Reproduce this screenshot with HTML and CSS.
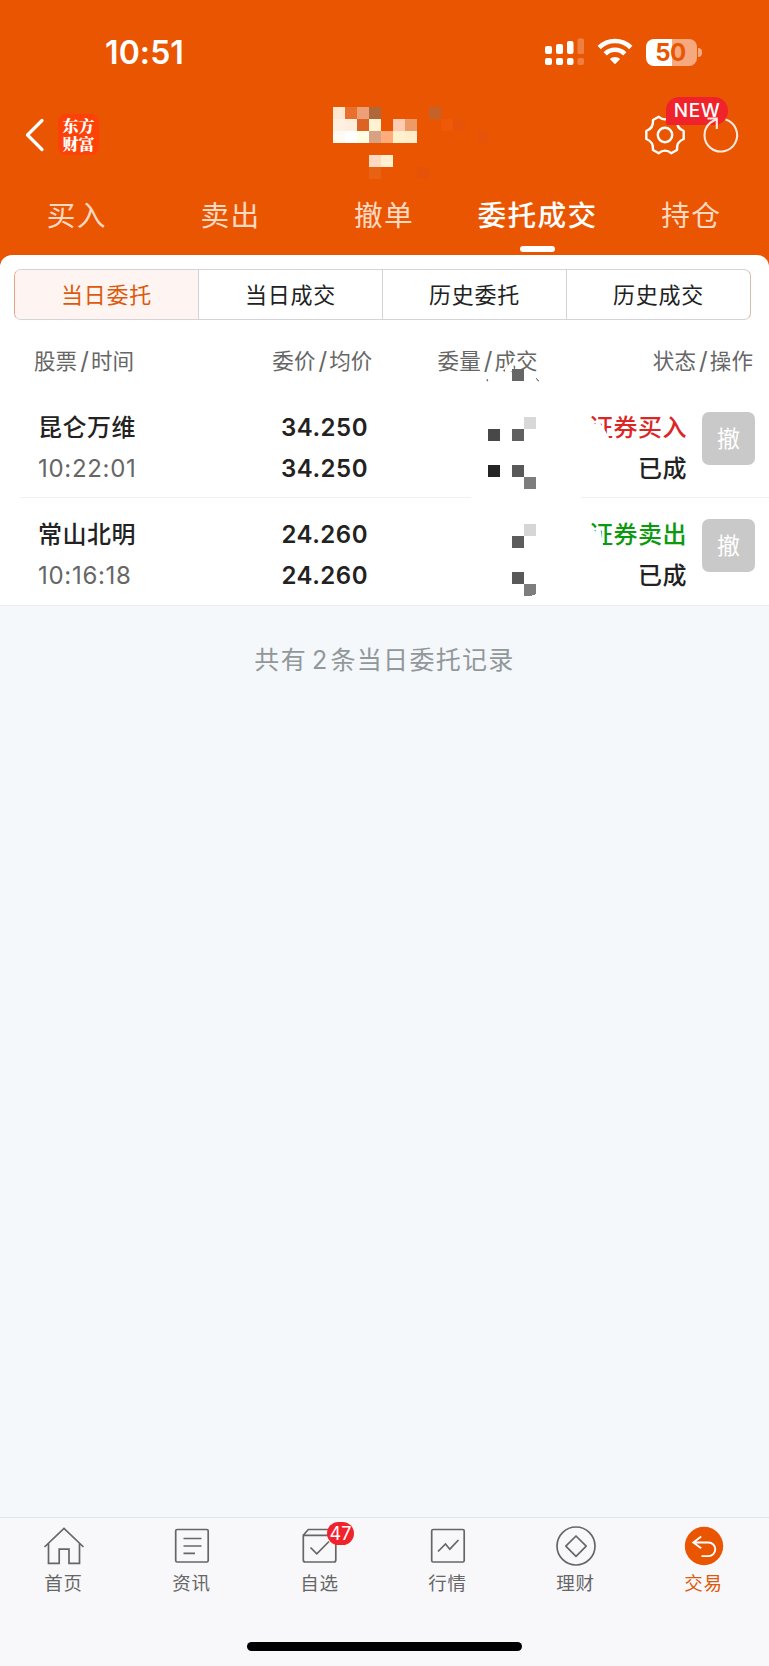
FILE: index.html
```
<!DOCTYPE html>
<html lang="zh-CN">
<head>
	<meta charset="UTF-8">
	<title>委托成交</title>
	<link rel="stylesheet" href="styles.css">
</head>
<body>
	<header class="top">
		<div class="status">
			<span class="clock">10:51</span>
			<div class="signals">
				<svg class="cell" width="40" height="28" viewBox="0 0 40 28" fill="#fff">
					<rect x="0" y="8" width="7" height="8" rx="2"/>
					<rect x="11" y="6" width="7" height="10" rx="2"/>
					<rect x="22" y="3" width="6.500" height="13" rx="2"/>
					<rect x="32.500" y="0.500" width="6.500" height="15.500" rx="1.500" opacity=".25"/>
					<rect x="0" y="20" width="7" height="7" rx="2"/>
					<rect x="11" y="20" width="7" height="7" rx="2"/>
					<rect x="22" y="20" width="6.500" height="7" rx="2"/>
					<rect x="32.500" y="20" width="6.500" height="7" rx="2" opacity=".25"/>
				</svg>
				<svg class="wifi" width="36" height="28" viewBox="0 0 36 28" fill="none" stroke="#fff" stroke-width="4.600">
					<path d="M2.200 9.500a22.500 22.500 0 0 1 31.600 0"/>
					<path d="M8.200 15.800a14 14 0 0 1 19.600 0"/>
					<path d="M18 26.300l-5.200-5.200a7.500 7.500 0 0 1 10.400 0z" fill="#fff" stroke="none"/>
				</svg>
				<div class="battery"><span>50</span></div>
				<i class="nub"></i>
			</div>
		</div>
		<div class="bar">
			<svg class="back" width="20" height="34" viewBox="0 0 20 34" fill="none" stroke="#fff" stroke-width="3.200" stroke-linecap="round" stroke-linejoin="round">
				<path d="M17 2.500L2.500 17 17 31.500"/>
			</svg>
			<div class="logo">东方<br>财富</div>
			<svg class="account" width="168" height="72" viewBox="0 0 168 72" shape-rendering="crispEdges">
				<rect x="0" y="0" width="12" height="12" fill="#ffe8cf"/>
				<rect x="12" y="0" width="12" height="12" fill="#e8702c"/>
				<rect x="24" y="0" width="12" height="12" fill="#eda077"/>
				<rect x="36" y="0" width="12" height="12" fill="#b0683a"/>
				<rect x="96" y="0" width="12" height="12" fill="#c4622a"/>
				<rect x="0" y="12" width="12" height="12" fill="#fff1e2"/>
				<rect x="12" y="12" width="12" height="12" fill="#ffeedd"/>
				<rect x="24" y="12" width="12" height="12" fill="#dd6324"/>
				<rect x="36" y="12" width="12" height="12" fill="#fff2d2"/>
				<rect x="60" y="12" width="12" height="12" fill="#fdccb2"/>
				<rect x="72" y="12" width="12" height="12" fill="#ee9a66"/>
				<rect x="108" y="12" width="12" height="12" fill="#ee5806"/>
				<rect x="120" y="12" width="12" height="12" fill="#e75308"/>
				<rect x="0" y="24" width="12" height="12" fill="#fffaf2"/>
				<rect x="12" y="24" width="12" height="12" fill="#fff"/>
				<rect x="24" y="24" width="12" height="12" fill="#fffde3"/>
				<rect x="36" y="24" width="12" height="12" fill="#d9a183"/>
				<rect x="48" y="24" width="12" height="12" fill="#ffab7c"/>
				<rect x="60" y="24" width="12" height="12" fill="#fff1cb"/>
				<rect x="72" y="24" width="12" height="12" fill="#ffedcb"/>
				<rect x="144" y="24" width="12" height="12" fill="#e75308"/>
				<rect x="36" y="48" width="12" height="12" fill="#fedac3"/>
				<rect x="48" y="48" width="12" height="12" fill="#fff0d0"/>
				<rect x="36" y="60" width="12" height="12" fill="#e96213"/>
				<rect x="84" y="60" width="12" height="12" fill="#e75209"/>
			</svg>
			<div class="tools">
				<svg class="gear" width="40" height="40" viewBox="0 0 40 40" fill="none" stroke="#fff" stroke-width="2.400" stroke-linejoin="round">
					<path d="M13.800 1.800C17.500 5 22.500 5 26.200 1.800L32 5C31.500 10.500 33.500 14 38.700 16V24C33.500 26 31.500 29.500 32 35L26.200 38.200C22.500 35 17.500 35 13.800 38.200L8 35C8.500 29.500 6.500 26 1.300 24V16C6.500 14 8.500 10.500 8 5Z"/>
					<circle cx="20" cy="20" r="7.200"/>
				</svg>
				<span class="new">NEW</span>
				<svg class="refresh" width="38" height="38" viewBox="0 0 38 38" fill="none" stroke="#ffe9dc" stroke-width="2.100">
					<path d="M23.500 3.600A16.300 16.300 0 1 1 8.500 6.600L14.500 3"/>
					<path d="M5.500 2.500H14.800V13"/>
				</svg>
			</div>
		</div>
		<nav class="tabs">
			<a>买入</a>
			<a>卖出</a>
			<a>撤单</a>
			<a class="on">委托成交</a>
			<a>持仓</a>
		</nav>
	</header>

	<main class="sheet">
		<div class="segment">
			<a class="on">当日委托</a>
			<a>当日成交</a>
			<a>历史委托</a>
			<a>历史成交</a>
		</div>
		<div class="head">
			<span>股票<i>/</i>时间</span>
			<span>委价<i>/</i>均价</span>
			<span>委量<i>/</i>成交
				<svg class="mask" width="60" height="24" viewBox="0 0 60 24">
					<path d="M19 11l6-7 3 7h5v2h-14z" fill="#fff"/>
					<rect x="26" y="11" width="12" height="12" fill="#666"/>
					<path d="M1 21l1 2h-1zM50 20l3 3h-1z" fill="#666" stroke="#666" stroke-width=".6"/>
				</svg>
			</span>
			<span>状态<i>/</i>操作</span>
		</div>
		<section class="order buy">
			<div class="stock"><b>昆仑万维</b><time>10:22:01</time></div>
			<div class="price"><b>34.250</b><b>34.250</b></div>
			<svg class="amount" width="48" height="72" viewBox="0 0 48 72" shape-rendering="crispEdges">
				<rect x="36" y="0" width="12" height="12" fill="#d8d8d8"/>
				<rect x="0" y="12" width="12" height="12" fill="#484848"/>
				<rect x="24" y="12" width="12" height="12" fill="#606060"/>
				<rect x="0" y="48" width="12" height="12" fill="#242424"/>
				<rect x="24" y="48" width="12" height="12" fill="#595959"/>
				<rect x="36" y="60" width="12" height="12" fill="#7d7d7d"/>
			</svg>
			<div class="state"><b class="side">证券买入</b><b>已成</b></div>
			<button class="cancel">撤</button>
		</section>
		<section class="order sell">
			<div class="stock"><b>常山北明</b><time>10:16:18</time></div>
			<div class="price"><b>24.260</b><b>24.260</b></div>
			<svg class="amount" width="48" height="72" viewBox="0 0 48 72" shape-rendering="crispEdges">
				<rect x="36" y="0" width="12" height="12" fill="#d6d6d6"/>
				<rect x="24" y="12" width="12" height="12" fill="#5c5c5c"/>
				<rect x="24" y="48" width="12" height="12" fill="#595959"/>
				<path d="M36 60h12v10l-6 2h-6z" fill="#7d7d7d"/>
			</svg>
			<div class="state"><b class="side">证券卖出</b><b>已成</b></div>
			<button class="cancel">撤</button>
		</section>
	</main>
	<p class="total">共有<i>2</i>条当日委托记录</p>

	<footer class="dock">
		<nav class="menu">
			<a>
				<svg width="42" height="42" viewBox="0 0 42 42"><path d="M1.500 21L21 2.500 40.500 21M5.500 17.500V37.300H16.200V23.200H26V37.300H36.500V17.500"/></svg>
				<span>首页</span>
			</a>
			<a>
				<svg width="42" height="42" viewBox="0 0 42 42"><rect x="4.700" y="3.500" width="32.500" height="32.500" rx="1.500"/><path d="M12.500 12.500h18M12.500 20h18M12.500 27.300h11.500"/></svg>
				<span>资讯</span>
			</a>
			<a>
				<svg width="42" height="42" viewBox="0 0 42 42"><path d="M4.300 9.300L9.300 3.500H31.500L36.800 9.300M4.300 9.300H36.800V34q0 2-2 2H6.300q-2 0-2-2zM11.500 21.500l6.300 6.300L30 15.500"/></svg>
				<span>自选</span>
				<em class="badge">47</em>
			</a>
			<a>
				<svg width="42" height="42" viewBox="0 0 42 42"><rect x="4.700" y="3.500" width="32.500" height="32.500" rx="1.500"/><path d="M11 25.500l7.500-7.500 4.300 5.200L31.500 14"/></svg>
				<span>行情</span>
			</a>
			<a>
				<svg width="42" height="42" viewBox="0 0 42 42"><circle cx="21" cy="20" r="19"/><path d="M21 10L31.200 20.200 21 30.300 10.800 20.200z" stroke-linejoin="round"/></svg>
				<span>理财</span>
			</a>
			<a class="on">
				<svg width="42" height="42" viewBox="0 0 42 42"><circle cx="21" cy="20" r="19.200"/><path d="M18.200 10.500L10.300 16.500 18.200 22.300M10.800 16.500H25.500a6.800 6.800 0 0 1 0 13.600H18.500"/></svg>
				<span>交易</span>
			</a>
		</nav>
		<div class="home"></div>
	</footer>
</body>
</html>
```
FILE: styles.css
```
* {
	box-sizing: border-box;
}
body {
	background-color: #f4f8fa;
	color: #222;
	display: flex;
	flex-direction: column;
	font-family: Inter, "Noto Sans CJK SC", sans-serif;
	height: 1666px;
	margin: 0px;
	width: 769px;
}
i, em {
	font-style: normal;
}
b {
	font-weight: 600;
}

/* header.top */
header.top {
	background-color: #ea5502;
	color: #fff;
	height: 271px;
}
.status {
	display: flex;
	height: 97px;
	justify-content: space-between;
	padding: 33px 67px 0px 105px;
}
.clock {
	font-size: 32px;
	font-weight: 600;
	letter-spacing: 0.1px;
	line-height: 40px;
}
.signals {
	align-items: center;
	display: flex;
	height: 38px;
}
.wifi {
	margin: 0px 13px 0px 12px;
}
.battery {
	background: linear-gradient(90deg, #fff 51%, #f6a97e 51%);
	border-radius: 8px;
	color: #ea5502;
	font-size: 24px;
	font-weight: 700;
	height: 27px;
	letter-spacing: -0.5px;
	line-height: 27px;
	padding-right: 2px;
	text-align: center;
	width: 51px;
}
.nub {
	background-color: #f6a97e;
	border-radius: 0px 4px 4px 0px;
	height: 9px;
	margin-left: 1px;
	width: 4px;
}
.bar {
	display: flex;
	height: 88px;
	padding-left: 25px;
	position: relative;
}
.back {
	margin-top: 21px;
}
.logo {
	background-color: #fd4208;
	border-radius: 8px;
	font: 900 16px/17.500px "Noto Serif CJK SC", "Noto Sans CJK SC", sans-serif;
	height: 41px;
	margin: 17px 0px 0px 13px;
	padding-top: 3px;
	text-align: center;
	width: 41px;
}
.account {
	margin: 10px 0px 0px 234px;
}
.tools {
	align-items: center;
	display: flex;
	gap: 17px;
	height: 76px;
	margin-left: 144px;
}
.refresh {
	position: relative;
	z-index: 1;
}
.new {
	background-color: #f0232c;
	border-radius: 13px 14px 14px 2px;
	font-size: 19px;
	font-weight: 500;
	height: 28px;
	left: 666px;
	letter-spacing: 0.6px;
	line-height: 28px;
	position: absolute;
	text-align: center;
	top: 0px;
	width: 62px;
}
.tabs {
	display: flex;
	height: 70px;
	padding-right: 1px;
}
.tabs a {
	align-items: center;
	color: #ffd9c2;
	display: flex;
	flex: 1;
	flex-direction: column;
	font-size: 28.700px;
	letter-spacing: 1.300px;
	line-height: 62px;
}
.tabs a.on {
	color: #fff;
	font-weight: 500;
}
.tabs a.on::after {
	background-color: #fff;
	border-radius: 3px;
	content: "";
	height: 6px;
	margin-top: -1px;
	width: 35px;
}

/* main.sheet */
.sheet {
	background-color: #fff;
	border-bottom: 1px solid #ebeeee;
	border-radius: 12px 12px 0px 0px;
	height: 351px;
	margin-top: -16px;
	padding-top: 14px;
}
.segment {
	border: 1px solid #d4d4d8;
	border-left-color: #e0a585;
	border-radius: 7px;
	border-right-color: #d6bdac;
	display: flex;
	height: 51px;
	margin: 0px 18px 0px 14px;
	overflow: hidden;
}
.segment a {
	border-left: 1px solid #d4d4d8;
	flex: 1;
	font-size: 22px;
	letter-spacing: 0.8px;
	line-height: 50px;
	text-align: center;
}
.segment a.on {
	background-color: #fef5f2;
	border-left: none;
	color: #dc5a0c;
}
.head {
	color: #666;
	display: flex;
	font-size: 21.500px;
	height: 70px;
	justify-content: space-between;
	letter-spacing: 0.1px;
	line-height: 82px;
	padding: 0px 16px 0px 34px;
}
.head span {
	position: relative;
	white-space: nowrap;
}
.head span:nth-child(2) {
	margin-left: 73px;
}
.head span:nth-child(4) {
	margin-left: 50px;
}
.head i {
	font-size: 24px;
	padding: 0px 2px 0px 3px;
}
.mask {
	left: 48px;
	position: absolute;
	top: 38px;
}
.order {
	display: grid;
	grid-template-columns: 200px 130px 157px 162px 53px;
	height: 108px;
	padding: 17px 0px 0px 38px;
	position: relative;
}
.order::after {
	background: linear-gradient(90deg, #f0f0f0 451px, transparent 451px, transparent 561px, #f0f0f0 561px);
	bottom: 0px;
	content: "";
	height: 1px;
	left: 20px;
	position: absolute;
	right: 0px;
}
.order.sell {
	height: 107px;
	padding-top: 16px;
}
.order.sell::after {
	display: none;
}
.order b, .order time {
	display: block;
	font-size: 24px;
	height: 41px;
	line-height: 41px;
	white-space: nowrap;
}
.stock b, .state b {
	font-weight: 500;
	letter-spacing: 0.5px;
}
.stock time {
	color: #666;
	letter-spacing: 0.7px;
}
.price {
	text-align: right;
}
.price b {
	letter-spacing: 0.5px;
}
.amount {
	margin: 10px 0px 0px 120px;
}
.state {
	text-align: right;
}
.side {
	position: relative;
}
.buy .side {
	color: #dc2626;
}
.sell .side {
	color: #0b990e;
}
.side::before {
	background-color: #fff;
	clip-path: polygon(0 0, 14% 22%, 34% 38%, 36% 20%, 50% 36%, 54% 62%, 62% 100%, 0 100%);
	content: "";
	height: 32px;
	position: absolute;
	right: 72px;
	top: 6px;
	width: 28px;
}
.buy .side::before {
	clip-path: polygon(0 0, 14% 22%, 34% 38%, 36% 20%, 58% 45%, 76% 72%, 80% 80%, 80% 100%, 0 100%);
}
.cancel {
	background-color: #c9c9c9;
	border: none;
	border-radius: 7px;
	color: #fff;
	font: 23px/51px "Noto Sans CJK SC", sans-serif;
	height: 53px;
	margin: 5px 0px 0px 15px;
	padding: 0px 0px 2px 0px;
	width: 53px;
}
.total {
	color: #92979a;
	font-size: 25px;
	letter-spacing: 1.300px;
	line-height: 36px;
	margin: 36px 0px 0px 0px;
	text-align: center;
}
.total i {
	padding: 0px 2px 0px 5px;
}

/* footer.dock */
.dock {
	background-color: #f8f8fb;
	border-top: 1px solid #dce7ea;
	height: 149px;
	margin-top: auto;
}
.menu {
	display: flex;
	height: 124px;
	padding: 8px 1px 0px 0px;
}
.menu a {
	align-items: center;
	color: #666;
	display: flex;
	flex: 1;
	flex-direction: column;
	font-size: 18.500px;
	line-height: 30px;
	position: relative;
}
.menu a span {
	letter-spacing: 0.7px;
	padding-right: 1px;
}
.menu a svg {
	fill: none;
	stroke: #666;
	stroke-width: 1.700;
}
.menu a.on {
	color: #dc5a0c;
}
.menu a.on svg {
	stroke: #fff;
	stroke-width: 1.900;
}
.menu a.on circle {
	fill: #ea5502;
	stroke: none;
}
.badge {
	background-color: #f0232c;
	border-radius: 12px;
	color: #fff;
	font-size: 18px;
	height: 23px;
	left: 71px;
	line-height: 24px;
	position: absolute;
	text-align: center;
	top: -4px;
	width: 27px;
}
.home {
	background-color: #000;
	border-radius: 5px;
	height: 9px;
	margin: 0px auto;
	width: 275px;
}
```
